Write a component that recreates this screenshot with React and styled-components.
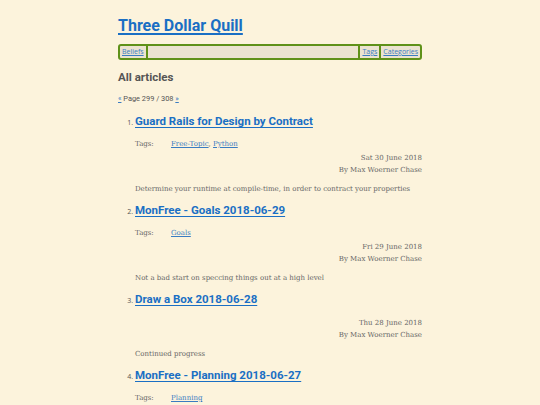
import React from "react";
import styled, { createGlobalStyle } from "styled-components";

const Global = createGlobalStyle`
  html, body { margin: 0; padding: 0; background: #fcf3dc; }
  body { font-family: "DejaVu Serif", serif; color: #555; }
`;

const Page = styled.div`
  width: 304px;
  margin: 0 auto;
  padding-top: 14px;
`;

const Title = styled.h1`
  margin: 0;
  font-family: Roboto, sans-serif;
  font-weight: 700;
  font-size: 16px;
  line-height: 24px;
  a { color: #1a6fc4; text-decoration: underline; text-decoration-thickness: 1.5px; text-underline-offset: 2px; }
`;

const Nav = styled.nav`
  margin-top: 6px;
  display: flex;
  align-items: stretch;
  height: 12px;
  border: 2px solid #5f9119;
  border-radius: 3px;
  background: #ebe3d0;
  font-family: "Open Sans", sans-serif;
  font-size: 7px;
  line-height: 12px;
`;

const NavLink = styled.a`
  color: #3a7cc2;
  text-decoration: underline;
  padding: 0 2px;
  ${(p) => (p.$sepRight ? "border-right: 2px solid #5f9119;" : "")}
`;

const Spacer = styled.div`
  flex: 1;
  border-right: 2px solid #5f9119;
`;

const Heading = styled.h2`
  margin: 9px 0 0;
  font-family: Roboto, sans-serif;
  font-weight: 700;
  font-size: 11.5px;
  line-height: 16px;
  color: #555;
`;

const Pager = styled.div`
  margin-top: 9px;
  font-family: Roboto, sans-serif;
  font-size: 7.4px;
  line-height: 10px;
  color: #555;
  a { color: #3a7cc2; }
`;

const List = styled.ol`
  margin: 8px 0 0;
  padding-left: 17px;
  font-size: 6.5px;
`;

const Item = styled.li`
  margin-bottom: 6px;
  font-family: "Open Sans", sans-serif;
  color: #555;
  &::marker { font-size: 7px; }
`;

const ItemTitle = styled.h3`
  margin: 0;
  font-family: Roboto, sans-serif;
  font-weight: 700;
  font-size: 11.5px;
  line-height: 18px;
  a { color: #1a6fc4; text-decoration-thickness: 1.3px; text-underline-offset: 1.5px; }
`;

const Tags = styled.div`
  display: flex;
  margin-top: 9px;
  font-family: "DejaVu Serif", serif;
  font-size: 7px;
  line-height: 10px;
  color: #666;
  span { width: 36px; }
  a { color: #3a7cc2; }
`;

const Meta = styled.div`
  margin-top: ${(p) => (p.$noTags ? "9px" : "3px")};
  text-align: right;
  font-family: "DejaVu Serif", serif;
  font-size: 7px;
  line-height: 12px;
  color: #666;
`;

const Summary = styled.p`
  margin: 7px 0 0;
  font-family: "DejaVu Serif", serif;
  font-size: 7px;
  line-height: 12px;
  color: #666;
`;

const articles = [
  { title: "Guard Rails for Design by Contract", tags: ["Free-Topic", "Python"], date: "Sat 30 June 2018", summary: "Determine your runtime at compile-time, in order to contract your properties" },
  { title: "MonFree - Goals 2018-06-29", tags: ["Goals"], date: "Fri 29 June 2018", summary: "Not a bad start on speccing things out at a high level" },
  { title: "Draw a Box 2018-06-28", tags: [], date: "Thu 28 June 2018", summary: "Continued progress" },
  { title: "MonFree - Planning 2018-06-27", tags: ["Planning"], date: "Wed 27 June 2018", summary: "" },
];

export default function App() {
  return (
    <>
      <Global />
      <Page>
        <Title><a href="#">Three Dollar Quill</a></Title>
        <Nav>
          <NavLink href="#" $sepRight>Beliefs</NavLink>
          <Spacer />
          <NavLink href="#" $sepRight>Tags</NavLink>
          <NavLink href="#">Categories</NavLink>
        </Nav>
        <Heading>All articles</Heading>
        <Pager><a href="#">«</a> Page 299 / 308 <a href="#">»</a></Pager>
        <List>
          {articles.map((a) => (
            <Item key={a.title}>
              <ItemTitle><a href="#">{a.title}</a></ItemTitle>
              {a.tags.length > 0 && (
                <Tags>
                  <span>Tags:</span>
                  <div>
                    {a.tags.map((t, i) => (
                      <React.Fragment key={t}>
                        {i > 0 && ", "}
                        <a href="#">{t}</a>
                      </React.Fragment>
                    ))}
                  </div>
                </Tags>
              )}
              <Meta $noTags={a.tags.length === 0}>
                {a.date}
                <br />
                By Max Woerner Chase
              </Meta>
              {a.summary && <Summary>{a.summary}</Summary>}
            </Item>
          ))}
        </List>
      </Page>
    </>
  );
}
